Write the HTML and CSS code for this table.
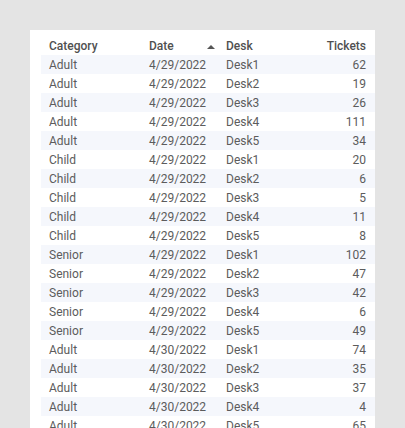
FILE: index.html
```html
<!DOCTYPE html>
<html>
<head>
<meta charset="utf-8">
<link rel="stylesheet" href="styles.css">
</head>
<body>
<div class="card">
<table class="grid">
<colgroup><col class="c1"><col class="c2"><col class="c3"><col class="c4"></colgroup>
<thead>
<tr><th>Category</th><th class="sorted">Date<span class="arrow"></span></th><th>Desk</th><th class="num">Tickets</th></tr>
</thead>
<tbody>
<tr><td>Adult</td><td>4/29/2022</td><td>Desk1</td><td class="num">62</td></tr>
<tr><td>Adult</td><td>4/29/2022</td><td>Desk2</td><td class="num">19</td></tr>
<tr><td>Adult</td><td>4/29/2022</td><td>Desk3</td><td class="num">26</td></tr>
<tr><td>Adult</td><td>4/29/2022</td><td>Desk4</td><td class="num">111</td></tr>
<tr><td>Adult</td><td>4/29/2022</td><td>Desk5</td><td class="num">34</td></tr>
<tr><td>Child</td><td>4/29/2022</td><td>Desk1</td><td class="num">20</td></tr>
<tr><td>Child</td><td>4/29/2022</td><td>Desk2</td><td class="num">6</td></tr>
<tr><td>Child</td><td>4/29/2022</td><td>Desk3</td><td class="num">5</td></tr>
<tr><td>Child</td><td>4/29/2022</td><td>Desk4</td><td class="num">11</td></tr>
<tr><td>Child</td><td>4/29/2022</td><td>Desk5</td><td class="num">8</td></tr>
<tr><td>Senior</td><td>4/29/2022</td><td>Desk1</td><td class="num">102</td></tr>
<tr><td>Senior</td><td>4/29/2022</td><td>Desk2</td><td class="num">47</td></tr>
<tr><td>Senior</td><td>4/29/2022</td><td>Desk3</td><td class="num">42</td></tr>
<tr><td>Senior</td><td>4/29/2022</td><td>Desk4</td><td class="num">6</td></tr>
<tr><td>Senior</td><td>4/29/2022</td><td>Desk5</td><td class="num">49</td></tr>
<tr><td>Adult</td><td>4/30/2022</td><td>Desk1</td><td class="num">74</td></tr>
<tr><td>Adult</td><td>4/30/2022</td><td>Desk2</td><td class="num">35</td></tr>
<tr><td>Adult</td><td>4/30/2022</td><td>Desk3</td><td class="num">37</td></tr>
<tr><td>Adult</td><td>4/30/2022</td><td>Desk4</td><td class="num">4</td></tr>
<tr><td>Adult</td><td>4/30/2022</td><td>Desk5</td><td class="num">65</td></tr>
</tbody>
</table>
</div>
</body>
</html>
```
FILE: styles.css
```css
html, body {
  margin: 0;
  padding: 0;
  background: #e4e4e4;
  height: 428px;
  overflow: hidden;
}
body {
  padding: 30px 30px 0 30px;
  font-family: Roboto, "Liberation Sans", sans-serif;
  font-size: 12px;
}
.card {
  background: #ffffff;
  width: 345px;
  padding: 6px 0 0 11px;
  box-sizing: border-box;
  height: 420px;
}
.grid {
  width: 334px;
  border-collapse: collapse;
  table-layout: fixed;
}
.c1 { width: 100px; }
.c2 { width: 77px; }
.c3 { width: 80px; }
.c4 { width: auto; }
.grid th, .grid td {
  height: 19px;
  padding: 1px 0 0 8px;
  box-sizing: border-box;
  text-align: left;
  white-space: nowrap;
  line-height: 18px;
}
.grid th {
  font-weight: 500;
  color: #505050;
}
.grid td {
  color: #5c5c5c;
}
.grid .num {
  text-align: right;
  padding-right: 9px;
}
.grid tbody tr:nth-child(odd) {
  background: #f5f7fc;
}
.sorted {
  position: relative;
}
.arrow {
  position: absolute;
  left: 66px;
  top: 9px;
  width: 0;
  height: 0;
  border-left: 4px solid transparent;
  border-right: 4px solid transparent;
  border-bottom: 4px solid #555;
}
```
